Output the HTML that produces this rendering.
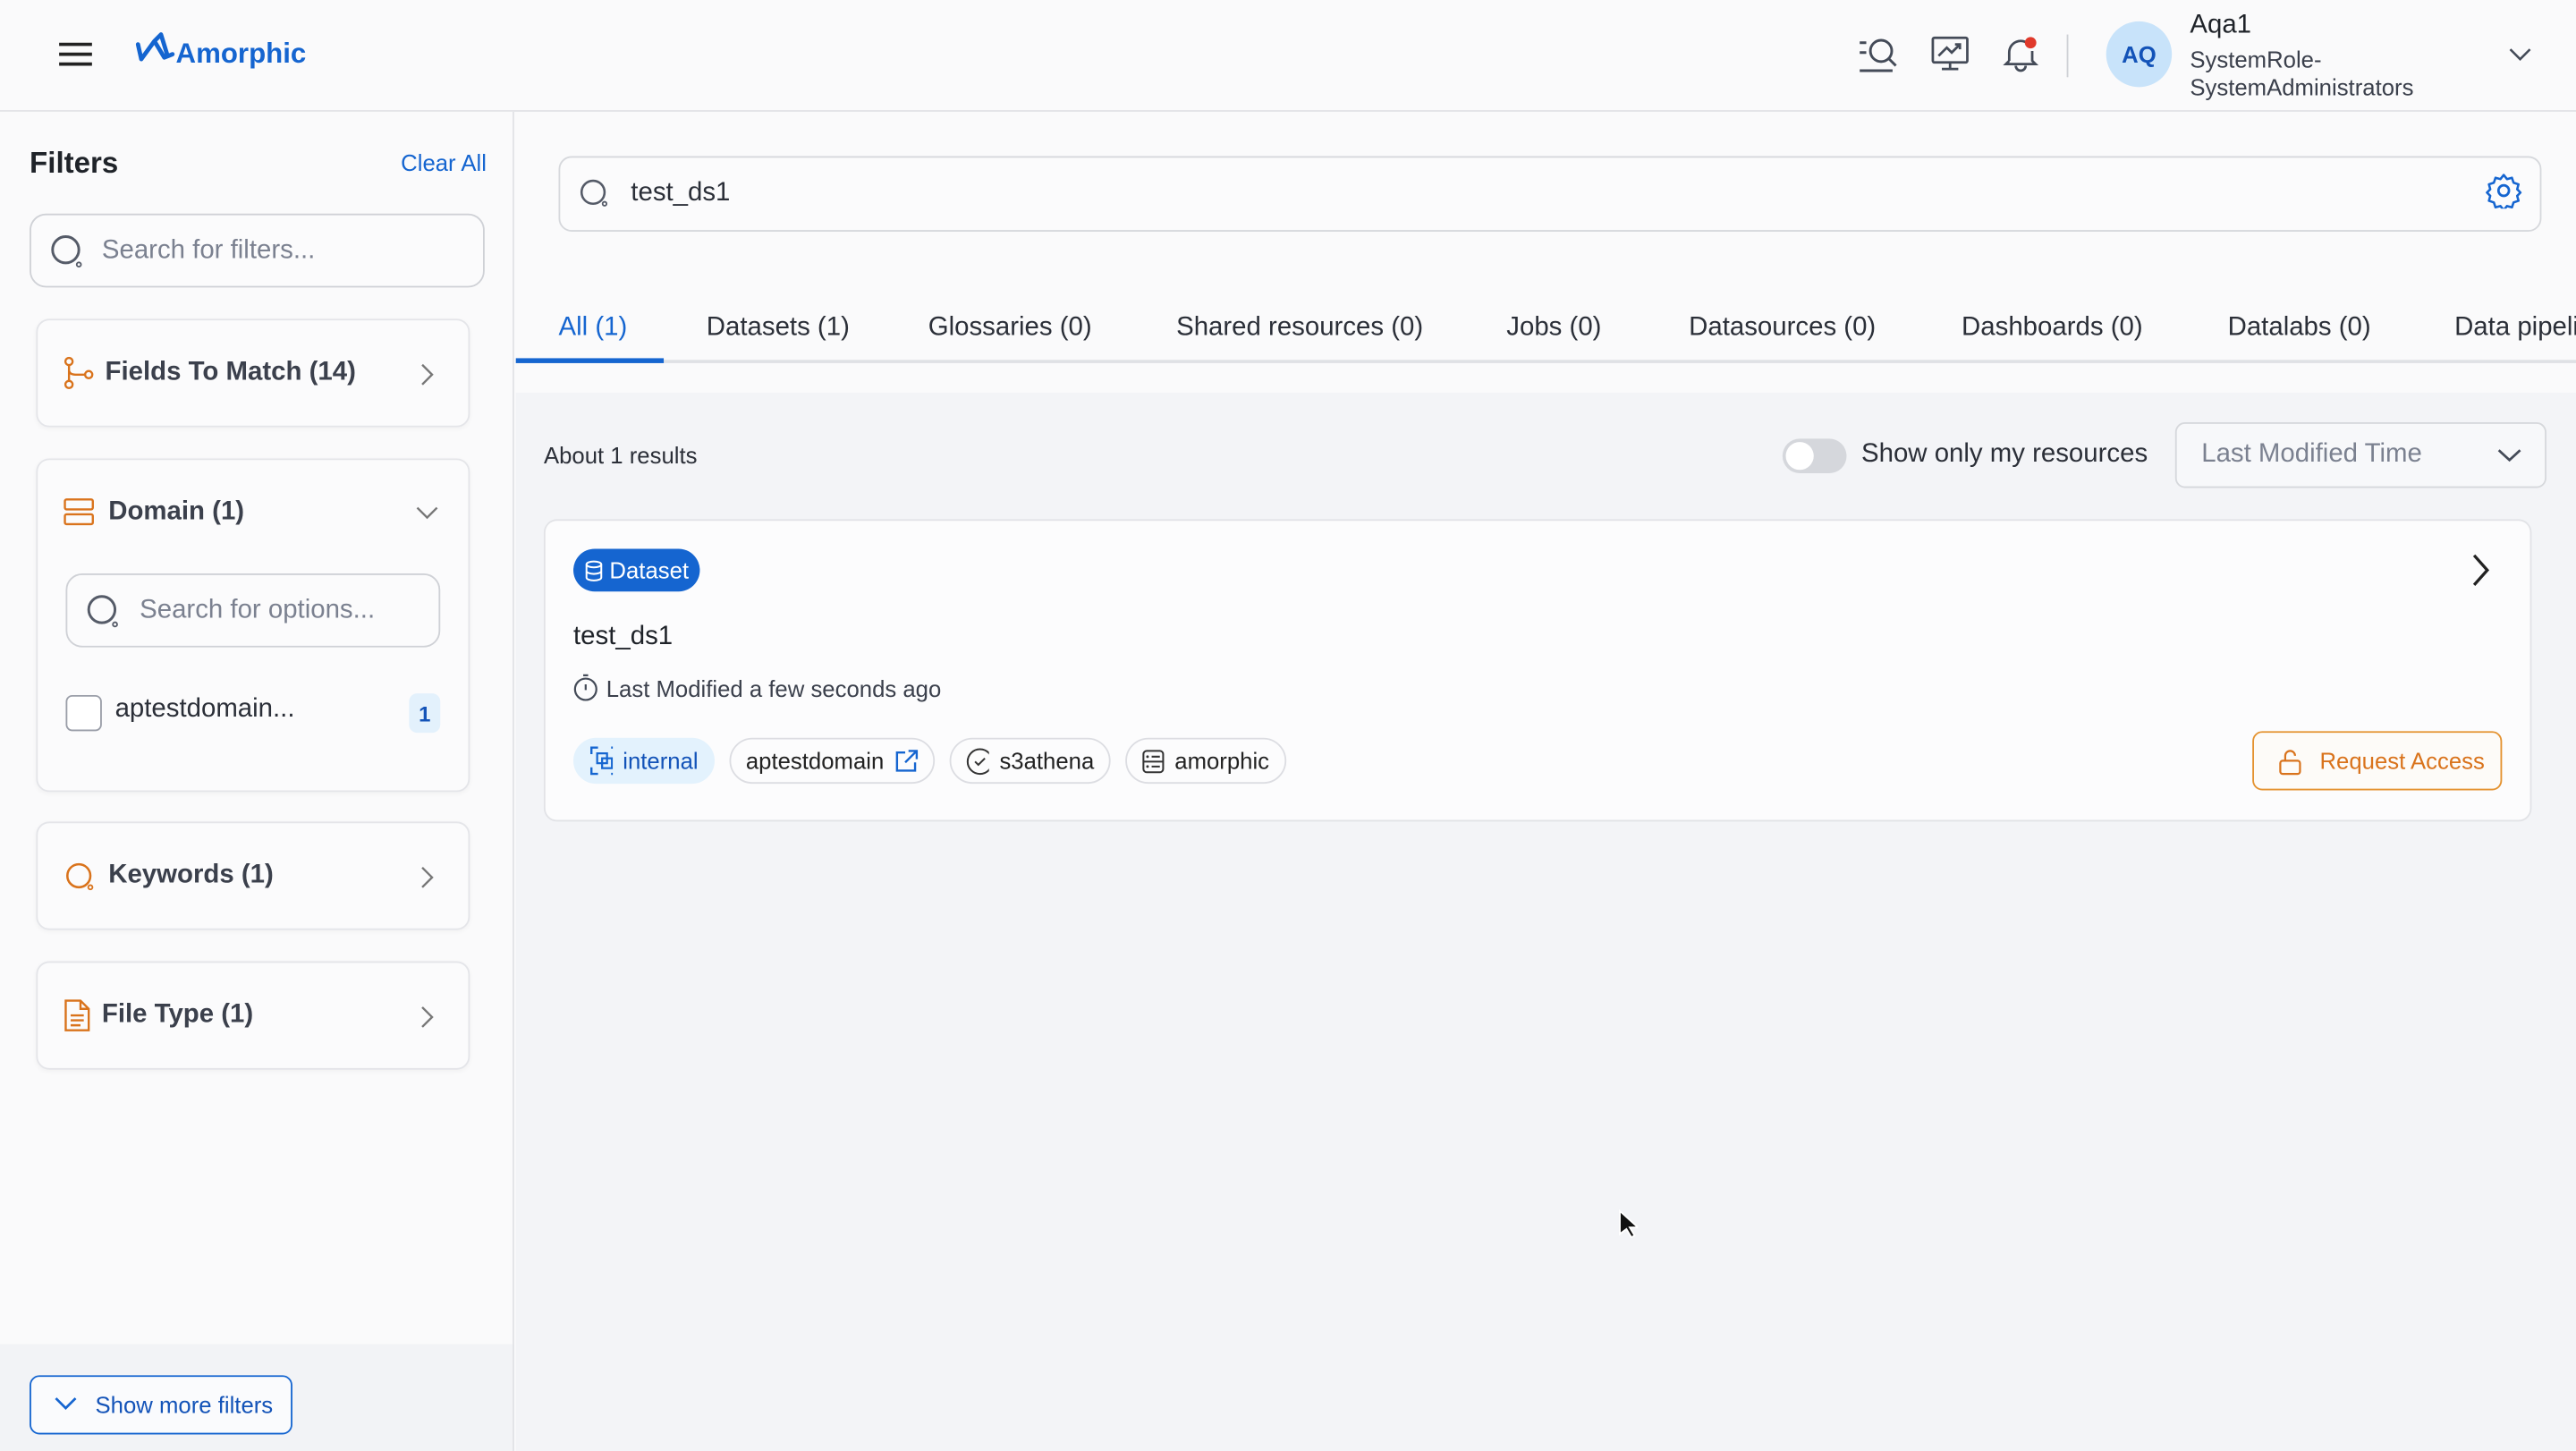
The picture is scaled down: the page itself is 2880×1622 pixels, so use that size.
<!DOCTYPE html>
<html><head><meta charset="utf-8"><style>
*{box-sizing:border-box;margin:0;padding:0}
html,body{width:2880px;height:1622px;overflow:hidden;background:#fff}
#w{position:absolute;left:0;top:0;width:1568px;height:883px;transform:scale(1.836735);transform-origin:0 0;font-family:"Liberation Sans",sans-serif;color:#1f2329;background:#fafafb}
.a{position:absolute}
.hdr{left:0;top:0;width:1568px;height:68px;background:#fafafb;border-bottom:1px solid #e2e3e7}
.side{left:0;top:68px;width:313px;height:815px;border-right:1px solid #e2e3e7;background:#fafafb}
.card{background:#fbfbfc;border:1px solid #e4e5e9;border-radius:8px;box-shadow:0 1px 3px rgba(0,0,0,.04)}
.inp{border:1px solid #cfd1d6;border-radius:10px;background:#fbfbfc}
.ph{color:#7b8190;font-size:16px}
.ct{font-size:16px;font-weight:bold;color:#3b404c}
.tab{top:191px;font-size:16px;color:#2b2f38}
.tag{top:449px;height:28px;border:1px solid #dcdde2;border-radius:14px;font-size:14px;display:flex;align-items:center;padding:0 9px;gap:6px;color:#222}
svg{display:block}
</style></head><body><div id="w">
<div class="a hdr"></div>
<svg class="a" style="left:35px;top:25px" width="22" height="16"><path d="M1 2h20M1 8h20M1 14h20" stroke="#222" stroke-width="2"/></svg>
<svg class="a" style="left:82px;top:19px" width="26" height="22"><path d="M2 8l2 9 8-11 6 10 5-2M12 6l4-4 4 13" fill="none" stroke="#1565d0" stroke-width="2.6" stroke-linejoin="round" stroke-linecap="round"/></svg>
<div class="a" style="left:107px;top:23px;font-size:17px;font-weight:bold;color:#1565d0">Amorphic</div>
<svg class="a" style="left:1130px;top:21px" width="26" height="24"><path d="M2 5h4M2 11h4M2 22h20" stroke="#444b58" stroke-width="1.6"/><circle cx="15" cy="10" r="6.5" fill="none" stroke="#444b58" stroke-width="1.6"/><path d="M20 15l4 4" stroke="#444b58" stroke-width="1.6"/></svg>
<svg class="a" style="left:1175px;top:21px" width="24" height="24"><rect x="1.5" y="2" width="21" height="15" rx="1" fill="none" stroke="#444b58" stroke-width="1.5"/><path d="M5 13l5-5 3 3 5-5M15 6h3v3M12 17v4M7 21h10" fill="none" stroke="#444b58" stroke-width="1.5"/></svg>
<svg class="a" style="left:1218px;top:21px" width="24" height="24"><path d="M5 16V11a7 7 0 0 1 12-5M19 10v6l2 2H3l2-2M9 19a3 3 0 0 0 6 0" fill="none" stroke="#444b58" stroke-width="1.5"/><circle cx="18" cy="5" r="3.5" fill="#e0392b"/></svg>
<div class="a" style="left:1258px;top:21px;width:1px;height:26px;background:#cfd1d6"></div>
<div class="a" style="left:1282px;top:13px;width:40px;height:40px;border-radius:50%;background:#c8e3fa;color:#1353b8;font-size:14px;font-weight:bold;display:flex;align-items:center;justify-content:center">AQ</div>
<div class="a" style="left:1333px;top:7px;font-size:16px;color:#1f2329">Aqa1</div>
<div class="a" style="left:1333px;top:28px;font-size:14px;color:#3b404c;line-height:17px">SystemRole-<br>SystemAdministrators</div>
<svg class="a" style="left:1527px;top:28px" width="14" height="10"><path d="M1 2l6 6 6-6" fill="none" stroke="#444b58" stroke-width="1.4"/></svg>

<div class="a side"></div>
<div class="a" style="left:18px;top:89px;font-size:18px;font-weight:bold">Filters</div>
<div class="a" style="left:244px;top:91px;font-size:14px;color:#1565d0">Clear All</div>
<div class="a inp" style="left:18px;top:130px;width:277px;height:45px"></div>
<svg class="a" style="left:30px;top:142px" width="22" height="22"><circle cx="10" cy="10" r="8" fill="none" stroke="#555b68" stroke-width="1.6"/><circle cx="18" cy="19" r="1.3" fill="none" stroke="#555b68"/></svg>
<div class="a ph" style="left:62px;top:144px">Search for filters...</div>

<div class="a card" style="left:22px;top:194px;width:264px;height:66px"></div>
<svg class="a" style="left:38px;top:217px" width="20" height="20"><circle cx="4" cy="3" r="2.2" fill="none" stroke="#d9731c" stroke-width="1.3"/><circle cx="4" cy="17" r="2.2" fill="none" stroke="#d9731c" stroke-width="1.3"/><circle cx="16" cy="11" r="2.2" fill="none" stroke="#d9731c" stroke-width="1.3"/><path d="M4 5v10M4 8q0 3 4 3h6" fill="none" stroke="#d9731c" stroke-width="1.3"/></svg>
<div class="a ct" style="left:64px;top:218px">Fields To Match (14)</div>
<svg class="a" style="left:256px;top:221px" width="8" height="14"><path d="M1 1l6 6-6 6" fill="none" stroke="#777" stroke-width="1.3"/></svg>

<div class="a card" style="left:22px;top:279px;width:264px;height:203px"></div>
<svg class="a" style="left:38px;top:302px" width="20" height="20"><rect x="1.5" y="2" width="17" height="6" rx="1" fill="none" stroke="#d9731c" stroke-width="1.3"/><rect x="1.5" y="11" width="17" height="6" rx="1" fill="none" stroke="#d9731c" stroke-width="1.3"/></svg>
<div class="a ct" style="left:66px;top:303px">Domain (1)</div>
<svg class="a" style="left:253px;top:308px" width="14" height="9"><path d="M1 1l6 6 6-6" fill="none" stroke="#777" stroke-width="1.3"/></svg>
<div class="a inp" style="left:40px;top:349px;width:228px;height:45px"></div>
<svg class="a" style="left:52px;top:361px" width="22" height="22"><circle cx="10" cy="10" r="8" fill="none" stroke="#555b68" stroke-width="1.6"/><circle cx="18" cy="19" r="1.3" fill="none" stroke="#555b68"/></svg>
<div class="a ph" style="left:85px;top:363px">Search for options...</div>
<div class="a" style="left:40px;top:423px;width:22px;height:22px;border:1.5px solid #9a9ea8;border-radius:4px;background:#fff"></div>
<div class="a" style="left:70px;top:423px;font-size:16px;color:#2b2f38">aptestdomain...</div>
<div class="a" style="left:249px;top:422px;width:19px;height:24px;border-radius:5px;background:#e3f1fc;color:#1353b8;font-size:13px;font-weight:bold;display:flex;align-items:center;justify-content:center">1</div>

<div class="a card" style="left:22px;top:500px;width:264px;height:66px"></div>
<svg class="a" style="left:39px;top:524px" width="20" height="20"><circle cx="9" cy="9" r="7" fill="none" stroke="#d9731c" stroke-width="1.4"/><circle cx="16" cy="16" r="1.3" fill="none" stroke="#d9731c"/></svg>
<div class="a ct" style="left:66px;top:524px">Keywords (1)</div>
<svg class="a" style="left:256px;top:527px" width="8" height="14"><path d="M1 1l6 6-6 6" fill="none" stroke="#777" stroke-width="1.3"/></svg>

<div class="a card" style="left:22px;top:585px;width:264px;height:66px"></div>
<svg class="a" style="left:38px;top:608px" width="18" height="20"><path d="M2 1h9l5 5v13H2zM11 1v5h5M5 10h8M5 13h8M5 16h6" fill="none" stroke="#d9731c" stroke-width="1.3"/></svg>
<div class="a ct" style="left:62px;top:609px">File Type (1)</div>
<svg class="a" style="left:256px;top:612px" width="8" height="14"><path d="M1 1l6 6-6 6" fill="none" stroke="#777" stroke-width="1.3"/></svg>

<div class="a" style="left:0;top:818px;width:313px;height:65px;background:#f2f3f6;border-right:1px solid #e2e3e7"></div>
<div class="a" style="left:18px;top:837px;width:160px;height:36px;border:1px solid #1565d0;border-radius:6px;background:#fafbfd"></div>
<svg class="a" style="left:33px;top:850px" width="14" height="9"><path d="M1 1l6 6 6-6" fill="none" stroke="#1565d0" stroke-width="1.5"/></svg>
<div class="a" style="left:58px;top:847px;font-size:14px;color:#1353b8">Show more filters</div>

<div class="a" style="left:314px;top:69px;width:1254px;height:170px;background:#fafafb"></div>
<div class="a" style="left:340px;top:95px;width:1207px;height:46px;border:1px solid #d6d8dc;border-radius:8px;background:#fbfbfc"></div>
<svg class="a" style="left:352px;top:108px" width="20" height="20"><circle cx="9" cy="9" r="7" fill="none" stroke="#555b68" stroke-width="1.4"/><circle cx="16" cy="16" r="1.2" fill="none" stroke="#555b68"/></svg>
<div class="a" style="left:384px;top:109px;font-size:16px;color:#2b2f38">test_ds1</div>
<svg class="a" style="left:1513px;top:105px" width="22" height="22"><circle cx="11" cy="11" r="3.2" fill="none" stroke="#1565d0" stroke-width="1.5"/><path d="M11 1.5l2 2.5 3-.8 1 3 3 1-.8 3 2 2-2 2 .8 3-3 1-1 3-3-.8-2 2.5-2-2.5-3 .8-1-3-3-1 .8-3-2-2 2-2-.8-3 3-1 1-3 3 .8z" fill="none" stroke="#1565d0" stroke-width="1.4" stroke-linejoin="round"/></svg>
<div class="a tab" style="left:340px;color:#1565d0">All (1)</div>
<div class="a tab" style="left:430px">Datasets (1)</div>
<div class="a tab" style="left:565px">Glossaries (0)</div>
<div class="a tab" style="left:716px">Shared resources (0)</div>
<div class="a tab" style="left:917px">Jobs (0)</div>
<div class="a tab" style="left:1028px">Datasources (0)</div>
<div class="a tab" style="left:1194px">Dashboards (0)</div>
<div class="a tab" style="left:1356px">Datalabs (0)</div>
<div class="a tab" style="left:1494px;white-space:nowrap">Data pipeli</div>
<div class="a" style="left:314px;top:219px;width:1254px;height:2px;background:#dfe1e5"></div>
<div class="a" style="left:314px;top:218px;width:90px;height:3px;background:#1565d0"></div>
<div class="a" style="left:314px;top:239px;width:1254px;height:644px;background:#f3f4f7"></div>
<div class="a" style="left:331px;top:269px;font-size:14px;color:#2b2f38">About 1 results</div>
<div class="a" style="left:1085px;top:267px;width:39px;height:21px;border-radius:11px;background:#d5d7dc"></div>
<div class="a" style="left:1087px;top:269px;width:17px;height:17px;border-radius:50%;background:#fff"></div>
<div class="a" style="left:1133px;top:268px;font-size:16px;color:#2b2f38">Show only my resources</div>
<div class="a" style="left:1324px;top:257px;width:226px;height:40px;border:1px solid #d6d8dc;border-radius:6px;background:#f7f8fa"></div>
<div class="a" style="left:1340px;top:268px;font-size:16px;color:#7b8190">Last Modified Time</div>
<svg class="a" style="left:1520px;top:272px" width="15" height="10"><path d="M1 2l6.5 6 6.5-6" fill="none" stroke="#444b58" stroke-width="1.5"/></svg>

<div class="a" style="left:331px;top:316px;width:1210px;height:184px;background:#fcfcfd;border:1px solid #e2e3e7;border-radius:8px"></div>
<div class="a" style="left:349px;top:334px;width:77px;height:26px;border-radius:13px;background:#1565d0;color:#fff;font-size:14px;display:flex;align-items:center;padding-left:7px;gap:4px"><svg width="11" height="13"><ellipse cx="5.5" cy="2.5" rx="4.5" ry="1.8" fill="none" stroke="#fff" stroke-width="1.1"/><path d="M1 2.5v8c0 1 2 1.8 4.5 1.8s4.5-.8 4.5-1.8v-8M1 6.5c0 1 2 1.8 4.5 1.8S10 7.5 10 6.5" fill="none" stroke="#fff" stroke-width="1.1"/></svg>Dataset</div>
<div class="a" style="left:349px;top:379px;font-size:16px;color:#1f2329">test_ds1</div>
<svg class="a" style="left:349px;top:410px" width="15" height="17"><circle cx="7.5" cy="9.5" r="6.5" fill="none" stroke="#444b58" stroke-width="1.2"/><path d="M7.5 6.5v3.5M6 1h3" stroke="#444b58" stroke-width="1.2"/></svg>
<div class="a" style="left:369px;top:411px;font-size:14px;color:#3b404c">Last Modified a few seconds ago</div>
<div class="a tag" style="left:349px;width:86px;background:#e3f2fd;border-color:#e3f2fd;color:#1353b8"><svg width="18" height="18"><path d="M1 5V1h4M13 1h4v4M17 13v4h-4M5 17H1v-4" fill="none" stroke="#1565d0" stroke-width="1.3"/><rect x="4.5" y="4.5" width="6" height="6" fill="none" stroke="#1565d0" stroke-width="1.2"/><rect x="7.5" y="7.5" width="6" height="6" fill="none" stroke="#1565d0" stroke-width="1.2"/></svg>internal</div>
<div class="a tag" style="left:444px;width:125px">aptestdomain<svg width="15" height="15"><path d="M7 2H2v11h11V8M9 1h5v5M14 1L7 8" fill="none" stroke="#1565d0" stroke-width="1.3"/></svg></div>
<div class="a tag" style="left:578px;width:98px"><svg width="17" height="17"><circle cx="8.5" cy="8.5" r="7.5" fill="none" stroke="#333" stroke-width="1.1"/><path d="M5.5 8.5l2 2 4-4" fill="none" stroke="#333" stroke-width="1.1"/></svg>s3athena</div>
<div class="a tag" style="left:685px;width:98px"><svg width="14" height="15"><rect x="1" y="1" width="12" height="13" rx="2" fill="none" stroke="#333" stroke-width="1.1"/><path d="M1 7.5h12M6 4.5h5M6 10.5h5" stroke="#333" stroke-width="1.1"/><circle cx="3.5" cy="4.5" r=".8" fill="#333"/><circle cx="3.5" cy="10.5" r=".8" fill="#333"/></svg>amorphic</div>
<svg class="a" style="left:1504px;top:337px" width="12" height="20"><path d="M2 1l8 9-8 9" fill="none" stroke="#222" stroke-width="1.8"/></svg>
<div class="a" style="left:1371px;top:445px;width:152px;height:36px;border:1px solid #e4922f;border-radius:6px;background:#fdfbf8;color:#d9731c;font-size:14px;display:flex;align-items:center;padding-left:14px;gap:9px"><svg width="17" height="17"><rect x="2" y="8" width="12" height="8" rx="1.5" fill="none" stroke="#d9731c" stroke-width="1.2"/><path d="M5 8V5a3 3 0 0 1 6 0" fill="none" stroke="#d9731c" stroke-width="1.2"/></svg>Request Access</div>
<svg class="a" style="left:985px;top:736px" width="12" height="18"><path d="M1 1v14l4-3 3 5 2-1-3-5h5z" fill="#111" stroke="#fff" stroke-width="1"/></svg>
</div></body></html>
